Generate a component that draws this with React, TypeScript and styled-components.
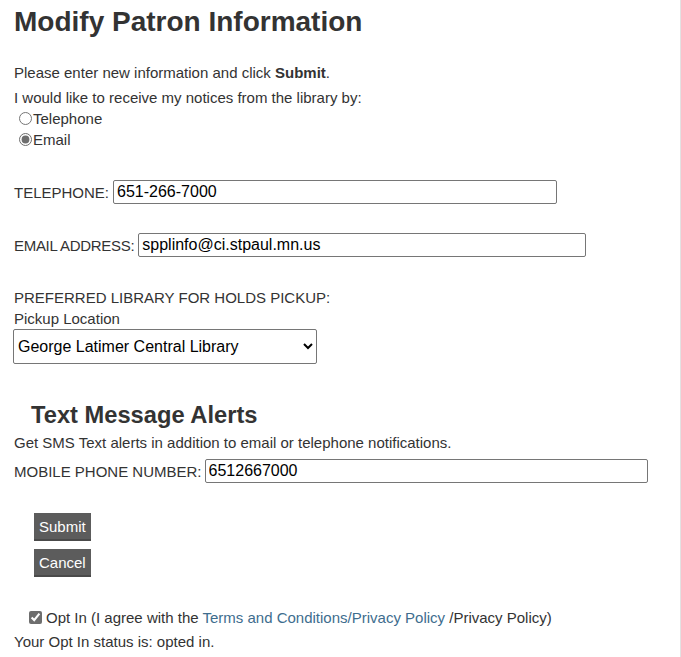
import styled, { createGlobalStyle } from 'styled-components';

const GlobalStyle = createGlobalStyle`
  html, body {
    margin: 0;
    padding: 0;
    background: #ffffff;
  }
  body {
    font-family: 'Liberation Sans', Arial, sans-serif;
    color: #333333;
  }
`;

const Page = styled.div`
  box-sizing: border-box;
  width: 681px;
  min-height: 657px;
  padding: 0 0 0 14px;
  border-right: 1px solid #e2e2e2;
  display: flex;
  flex-direction: column;
  align-items: flex-start;
  font-size: 15px;
  line-height: 21px;
`;

const Title = styled.h1`
  margin: 0;
  font-size: 28px;
  line-height: 44px;
  font-weight: 700;
  color: #333333;
`;

const Text = styled.p<{ $mt?: number }>`
  margin: ${({ $mt }) => $mt ?? 0}px 0 0;
  font-size: 15px;
  line-height: 21px;
`;

const RadioGroup = styled.div`
  display: flex;
  flex-direction: column;
  padding-left: 5px;
`;

const RadioLabel = styled.label`
  display: flex;
  align-items: center;
  gap: 1px;
  height: 21px;
  font-size: 15px;
`;

const Radio = styled.input`
  margin: 0;
  width: 13px;
  height: 13px;
  accent-color: #6e6e6e;
`;

const FieldRow = styled.div<{ $mt: number; $gap?: number }>`
  display: flex;
  align-items: center;
  gap: ${({ $gap }) => $gap ?? 4}px;
  height: 24px;
  margin-top: ${({ $mt }) => $mt}px;
`;

const Label = styled.label<{ $tight?: boolean }>`
  font-size: 15px;
  text-transform: uppercase;
  letter-spacing: ${({ $tight }) => ($tight ? '-0.3px' : 'normal')};
`;

const TextInput = styled.input<{ $w: number }>`
  box-sizing: border-box;
  width: ${({ $w }) => $w}px;
  height: 24px;
  margin: 0;
  padding: 1px 3px;
  border: 1px solid #767676;
  border-radius: 2px;
  font-family: 'Liberation Sans', Arial, sans-serif;
  font-size: 16px;
  color: #000000;
  background: #ffffff;
`;

const Select = styled.select`
  box-sizing: border-box;
  width: 304px;
  height: 35px;
  margin: 0 0 0 -1px;
  padding: 0;
  border: 1px solid #767676;
  border-radius: 2px;
  font-family: 'Liberation Sans', Arial, sans-serif;
  font-size: 16px;
  color: #000000;
  background: #ffffff;
`;

const SubHeading = styled.h2`
  margin: 36px 0 0;
  padding-left: 17px;
  font-size: 23.7px;
  line-height: 30px;
  font-weight: 700;
  color: #333333;
`;

const ButtonStack = styled.div`
  display: flex;
  flex-direction: column;
  align-items: flex-start;
  gap: 8px;
  margin: 30px 0 0 20px;
`;

const Button = styled.button`
  box-sizing: border-box;
  height: 28px;
  margin: 0;
  padding: 0 5px;
  border: none;
  border-bottom: 2px solid #4a4a4a;
  background: #5c5c5c;
  color: #ffffff;
  font-family: 'Liberation Sans', Arial, sans-serif;
  font-size: 15px;
  cursor: pointer;
`;

const OptInRow = styled.label`
  display: flex;
  align-items: center;
  gap: 4px;
  margin: 30px 0 0 15px;
  height: 21px;
  font-size: 15px;
`;

const Checkbox = styled.input`
  margin: 0;
  width: 13px;
  height: 13px;
  accent-color: #6e6e6e;
`;

const Link = styled.a`
  color: #3e6d8e;
  text-decoration: none;
`;

export default function App() {
  return (
    <>
      <GlobalStyle />
      <Page>
        <Title>Modify Patron Information</Title>
        <Text $mt={18}>
          Please enter new information and click <b>Submit</b>.
        </Text>
        <Text $mt={4}>I would like to receive my notices from the library by:</Text>
        <RadioGroup>
          <RadioLabel>
            <Radio type="radio" name="notice" value="phone" />
            Telephone
          </RadioLabel>
          <RadioLabel>
            <Radio type="radio" name="notice" value="email" defaultChecked />
            Email
          </RadioLabel>
        </RadioGroup>

        <FieldRow $mt={30}>
          <Label>Telephone:</Label>
          <TextInput $w={444} defaultValue="651-266-7000" />
        </FieldRow>

        <FieldRow $mt={29}>
          <Label $tight>Email Address:</Label>
          <TextInput $w={448} defaultValue="spplinfo@ci.stpaul.mn.us" />
        </FieldRow>

        <Text $mt={30}>PREFERRED LIBRARY FOR HOLDS PICKUP:</Text>
        <Text>Pickup Location</Text>
        <Select defaultValue="central">
          <option value="central">George Latimer Central Library</option>
        </Select>

        <SubHeading>Text Message Alerts</SubHeading>
        <Text $mt={2}>Get SMS Text alerts in addition to email or telephone notifications.</Text>
        <FieldRow $mt={6} $gap={3}>
          <Label>Mobile Phone Number:</Label>
          <TextInput $w={443} defaultValue="6512667000" />
        </FieldRow>

        <ButtonStack>
          <Button>Submit</Button>
          <Button>Cancel</Button>
        </ButtonStack>

        <OptInRow>
          <Checkbox type="checkbox" defaultChecked />
          <span>
            Opt In (I agree with the <Link href="#">Terms and Conditions/Privacy Policy</Link> /Privacy
            Policy)
          </span>
        </OptInRow>
        <Text $mt={3}>Your Opt In status is: opted in.</Text>
      </Page>
    </>
  );
}
